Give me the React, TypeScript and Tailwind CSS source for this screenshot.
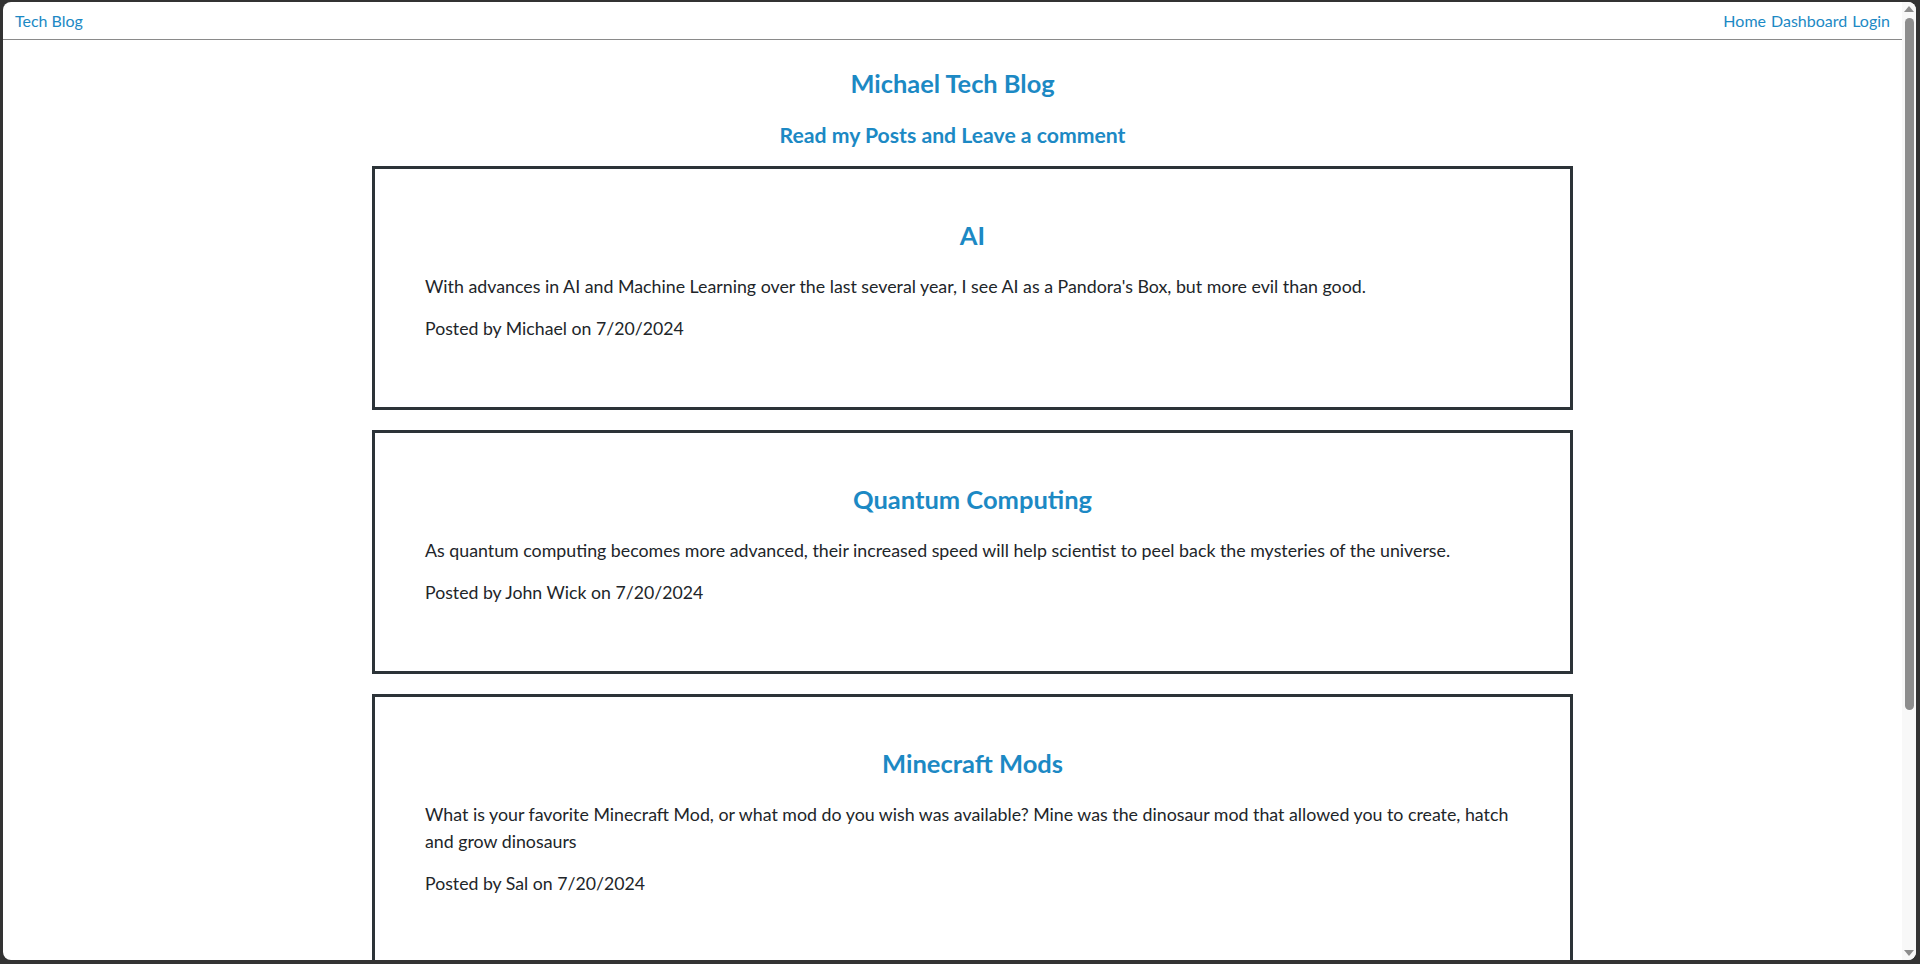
const posts = [
  {
    title: "AI",
    body: "With advances in AI and Machine Learning over the last several year, I see AI as a Pandora's Box, but more evil than good.",
    author: "Michael",
    date: "7/20/2024",
  },
  {
    title: "Quantum Computing",
    body: "As quantum computing becomes more advanced, their increased speed will help scientist to peel back the mysteries of the universe.",
    author: "John Wick",
    date: "7/20/2024",
  },
  {
    title: "Minecraft Mods",
    body: "What is your favorite Minecraft Mod, or what mod do you wish was available? Mine was the dinosaur mod that allowed you to create, hatch and grow dinosaurs",
    author: "Sal",
    date: "7/20/2024",
  },
];

function NavBar() {
  return (
    <header className="h-[38px] flex items-center justify-between pl-[12px] pr-[12px] border-b border-[#8a8a8a] text-[16px] text-[#1c89c4]">
      <a href="#">Tech Blog</a>
      <nav className="flex gap-[5px]">
        <a href="#">Home</a>
        <a href="#">Dashboard</a>
        <a href="#">Login</a>
      </nav>
    </header>
  );
}

function PostCard({ title, body, author, date }: (typeof posts)[number]) {
  return (
    <li className="border-[3px] border-[#2c3338] pl-[50px] pr-[36px] pt-[50px] pb-[65px] mb-[20px]">
      <h2 className="text-center text-[25.5px] leading-[32px] font-bold text-[#1c89c4] mb-[22px] pr-[14px]">{title}</h2>
      <p className="text-[17.8px] leading-[27px] text-[#212529] mb-[15px]">{body}</p>
      <p className="text-[17.7px] leading-[27px] text-[#212529]">
        Posted by {author} on {date}
      </p>
    </li>
  );
}

function Scrollbar() {
  return (
    <div className="w-[14px] bg-[#f8f8f8] flex flex-col items-center py-[4px]">
      <div className="w-0 h-0 border-l-[5px] border-r-[5px] border-b-[6px] border-l-transparent border-r-transparent border-b-[#8d8d8d]" />
      <div className="w-[9px] h-[692px] rounded-full bg-[#8d8d8d] mt-[6px]" />
      <div className="mt-auto w-0 h-0 border-l-[5px] border-r-[5px] border-t-[6px] border-l-transparent border-r-transparent border-t-[#8d8d8d]" />
    </div>
  );
}

export default function App() {
  return (
    <div className="h-screen bg-[#333333] pt-[2px] pl-[3px] pr-[4px] pb-[4px]" style={{ fontFamily: "Lato, 'Noto Sans', sans-serif" }}>
      <div className="h-full bg-white rounded-[8px] overflow-hidden flex">
        <main className="flex-1 overflow-hidden">
          <NavBar />
          <div className="text-center text-[#1c89c4] font-bold">
            <h1 className="text-[25.4px] leading-[32px] mt-[27px]">Michael Tech Blog</h1>
            <h3 className="text-[21.2px] leading-[28px] mt-[22px]">Read my Posts and Leave a comment</h3>
          </div>
          <ul className="w-[1241px] mx-auto pl-[40px] mt-[17px]">
            {posts.map((p) => (
              <PostCard key={p.title} {...p} />
            ))}
          </ul>
        </main>
        <Scrollbar />
      </div>
    </div>
  );
}
